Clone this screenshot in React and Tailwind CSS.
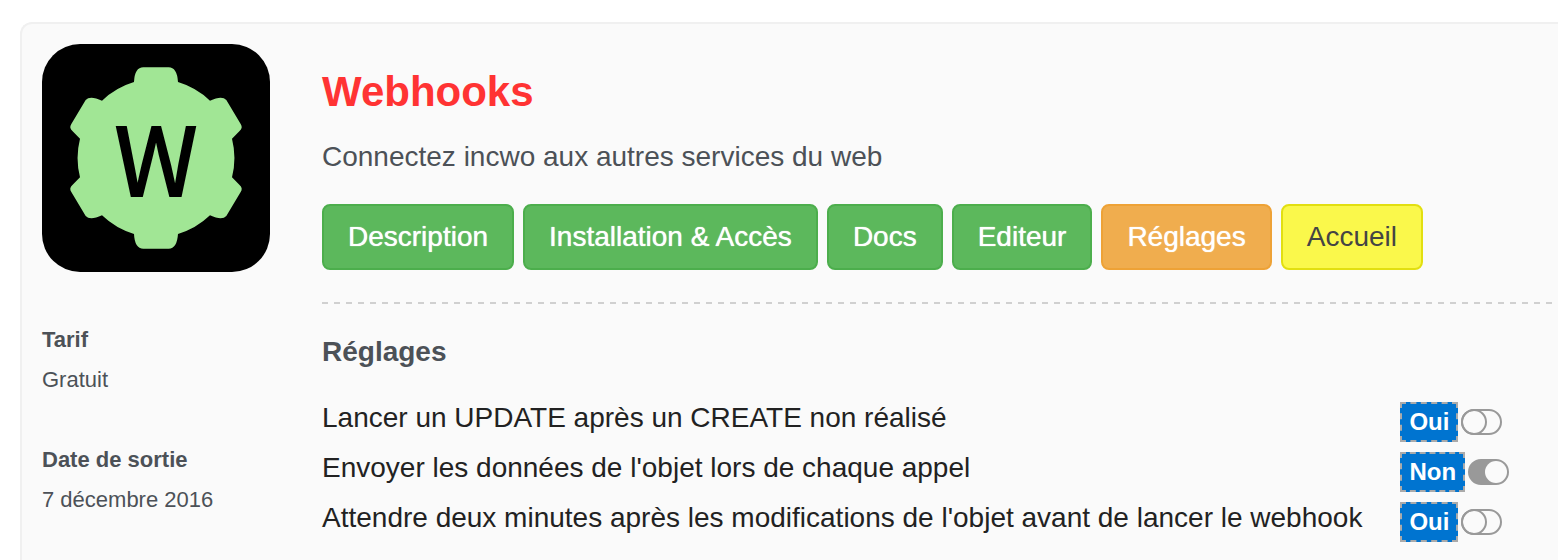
import { useState } from 'react'
import clsx from 'clsx'

const tabs = [
  { label: 'Description', style: 'bg-[#5cb85c] border-[#4cae4c] text-white [text-shadow:0_0_1px_#fff]' },
  { label: 'Installation & Accès', style: 'bg-[#5cb85c] border-[#4cae4c] text-white [text-shadow:0_0_1px_#fff]' },
  { label: 'Docs', style: 'bg-[#5cb85c] border-[#4cae4c] text-white [text-shadow:0_0_1px_#fff]' },
  { label: 'Editeur', style: 'bg-[#5cb85c] border-[#4cae4c] text-white [text-shadow:0_0_1px_#fff]' },
  { label: 'Réglages', style: 'bg-[#f0ad4e] border-[#eea236] text-white [text-shadow:0_0_1px_#fff]' },
  { label: 'Accueil', style: 'bg-[#faf84b] border-[#e2df10] text-[#444]' },
]

const infos = [
  { titre: 'Tarif', valeur: 'Gratuit' },
  { titre: 'Date de sortie', valeur: '7 décembre 2016' },
]

const initial = [
  { id: 'update', label: 'Lancer un UPDATE après un CREATE non réalisé', on: false },
  { id: 'donnees', label: "Envoyer les données de l'objet lors de chaque appel", on: true },
  { id: 'attente', label: "Attendre deux minutes après les modifications de l'objet avant de lancer le webhook", on: false },
]

function Logo() {
  return (
    <svg viewBox="0 0 684 684" className="block w-full rounded-[38px] bg-black" role="img">
      <path
        fill="#a1e695"
        d="M276 114Q278 70 304 70H380Q405 70 408 114A236 236 0 0 1 504 170Q540 153 553 168L596 240Q604 252 592 262L570 284A236 236 0 0 1 570 400L592 422Q604 432 596 444L553 516Q540 531 504 514A236 236 0 0 1 408 570Q405 614 380 614H304Q278 614 276 570A236 236 0 0 1 180 514Q144 531 131 516L88 444Q80 432 92 422L114 400A236 236 0 0 1 114 284L92 262Q80 252 88 240L131 168Q144 153 180 170A236 236 0 0 1 276 114Z"
      />
      <text x="342" y="456" textAnchor="middle" className="fill-black stroke-black stroke-[6px] text-[284px] font-normal font-['Noto_Sans_CJK_JP',sans-serif]">W</text>
    </svg>
  )
}

function Reglage({ item, onToggle }) {
  return (
    <tr>
      <td className="align-top pr-[38px] text-[28px] leading-10 text-[#222]">
        <label htmlFor={item.id}>{item.label}</label>
      </td>
      <td className="align-top pt-1 pb-[6px]">
        <div className="flex items-center gap-[3px]">
          <button
            onClick={onToggle}
            className="h-10 px-[7px] border-2 border-dashed border-[#aaa] bg-[#0074d0] text-white text-2xl leading-9 font-bold"
          >
            {item.on ? 'Non' : 'Oui'}
          </button>
          <input
            id={item.id}
            type="checkbox"
            checked={item.on}
            onChange={onToggle}
            className={clsx(
              'appearance-none flex w-[41px] h-[26px] rounded-full border-2 border-[#999]',
              'after:block after:shrink-0 after:rounded-full after:content-[""]',
              item.on
                ? 'bg-[#999] justify-end after:size-[22px] after:bg-[#fafafa]'
                : 'after:size-[26px] after:-m-[2px] after:border-2 after:border-[#999]'
            )}
          />
        </div>
      </td>
    </tr>
  )
}

export default function App() {
  const [reglages, setReglages] = useState(initial)

  const toggle = id => setReglages(reglages.map(r => (r.id === id ? { ...r, on: !r.on } : r)))

  return (
    <div className="min-h-screen flex flex-col bg-white pt-[22px] pl-5 font-['Liberation_Sans',Arial,sans-serif]">
      <div className="flex-1 flex gap-[52px] pt-5 pl-5 bg-[#fafafa] border-t-2 border-l-2 border-[#f0f0f0] rounded-tl-xl">
        <aside className="w-[228px] shrink-0 text-[22px] leading-10 text-[#4c5157]">
          <Logo />
          <dl className="mt-12 space-y-10">
            {infos.map(i => (
              <div key={i.titre}>
                <dt className="font-bold">{i.titre}</dt>
                <dd>{i.valeur}</dd>
              </div>
            ))}
          </dl>
        </aside>

        <main className="flex-1 min-w-0 pt-[27px] text-[28px]">
          <h1 className="text-[42px] leading-[42px] font-bold text-[#ff3333]">Webhooks</h1>
          <p className="mt-6 leading-10 text-[#4c5157]">Connectez incwo aux autres services du web</p>

          <nav className="mt-[27px] flex flex-wrap gap-[9px]">
            {tabs.map(t => (
              <a key={t.label} href="#" className={clsx('px-6 py-[11px] leading-10 border-2 rounded-lg whitespace-nowrap', t.style)}>
                {t.label}
              </a>
            ))}
          </nav>

          <hr className="mt-8 h-[2px] border-0 bg-[repeating-linear-gradient(90deg,#d0d0d0_0_6px,transparent_6px_12px)]" />

          <h2 className="mt-7 leading-10 font-bold text-[#4c5157]">Réglages</h2>
          <table className="mt-[26px]">
            <tbody>
              {reglages.map(r => (
                <Reglage key={r.id} item={r} onToggle={() => toggle(r.id)} />
              ))}
            </tbody>
          </table>
        </main>
      </div>
    </div>
  )
}
